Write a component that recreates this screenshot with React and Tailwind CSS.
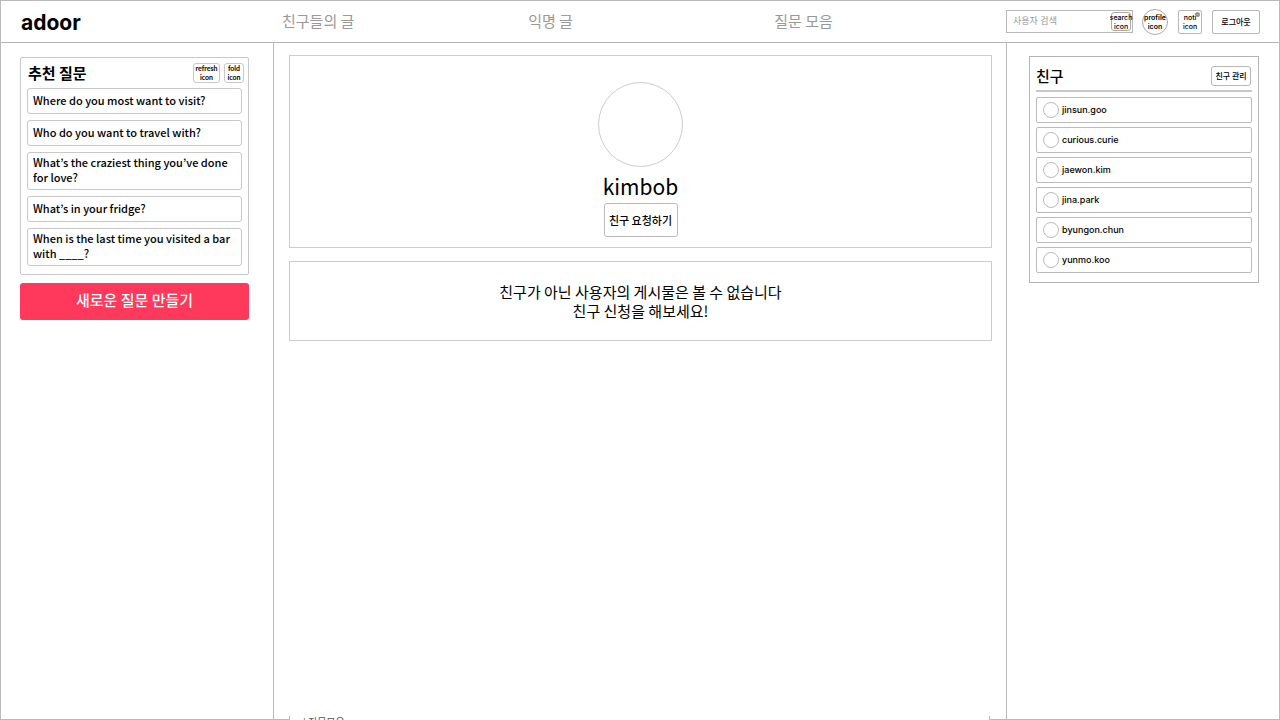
const questions = [
  'Where do you most want to visit?',
  'Who do you want to travel with?',
  'What’s the craziest thing you’ve done for love?',
  'What’s in your fridge?',
  'When is the last time you visited a bar with ____?',
];

const friends = ['jinsun.goo', 'curious.curie', 'jaewon.kim', 'jina.park', 'byungon.chun', 'yunmo.koo'];

function Header() {
  return (
    <header className="flex h-[42px] shrink-0 items-center border-b border-[#b4b4b4]">
      <div className="w-[273px] shrink-0 pl-5 pt-0.5">
        <a href="#home" className="font-['Inter','Liberation_Sans',sans-serif] text-[21px] font-bold leading-6">
          adoor
        </a>
      </div>
      <nav className="grid flex-1 grid-cols-[34fr_34fr_32fr] pb-0.5 pl-2 text-[15px] leading-5 text-[#999]">
        <a href="#friends">친구들의 글</a>
        <a href="#anonymous">익명 글</a>
        <a href="#questions">질문 모음</a>
      </nav>
      <div className="flex w-[273px] shrink-0 items-center pr-[19px] font-['Inter','Noto_Sans_CJK_KR',sans-serif]">
        <div className="flex h-[23px] w-[127px] items-center border border-[#b8b8b8]">
          <input
            type="search"
            aria-label="사용자 검색"
            placeholder="사용자 검색"
            className="w-0 flex-1 bg-transparent pb-0.5 pl-1.5 text-[9px] leading-3 outline-none placeholder:text-[#999]"
          />
          <button className="mr-px flex h-[19px] w-5 items-center justify-center rounded-[3px] border border-[#aaa] text-[7px] font-medium leading-[9px]">
            <span className="shrink-0">search<br />icon</span>
          </button>
        </div>
        <button className="ml-[9px] flex size-[26px] items-center justify-center rounded-full border border-[#aaa] text-[7px] font-semibold leading-[9px]">
          <span className="shrink-0">profile<br />icon</span>
        </button>
        <button className="relative ml-2.5 flex h-6 w-6 items-center justify-center rounded-[2px] border border-[#b8b8b8] text-[7px] font-medium leading-[9px]">
          <span>noti<br />icon</span>
          <span className="absolute right-px top-px size-[5px] rounded-full bg-[#999]" />
        </button>
        <button className="ml-auto h-6 w-12 rounded-[2px] border border-[#b8b8b8] text-[8px] font-medium leading-3">
          로그아웃
        </button>
      </div>
    </header>
  );
}

function QuestionPanel() {
  return (
    <aside className="w-[272px] shrink-0 pl-[19px] pr-6 pt-3.5">
      <section className="rounded-[2px] border border-[#c8c8c8] px-1.5 pb-2 pt-[5px]">
        <div className="mb-[5px] flex h-5 items-center">
          <h2 className="pl-px text-[15px] font-bold leading-5">추천 질문</h2>
          <button className="ml-auto h-5 w-[27px] whitespace-nowrap rounded-[3px] border border-[#c8c8c8] text-center font-['Lato',sans-serif] text-[7px] font-bold leading-[9px]">
            refresh<br />icon
          </button>
          <button className="-mr-0.5 ml-1 h-5 w-5 rounded-[3px] border border-[#c8c8c8] font-['Lato',sans-serif] text-[7px] font-bold leading-[9px]">
            fold<br />icon
          </button>
        </div>
        <ul className="flex flex-col gap-1.5">
          {questions.map((question) => (
            <li key={question} className="flex min-h-[26px] items-center rounded-[3px] border border-[#c8c8c8] px-[5px] pb-1 pt-0.5 text-[11px] font-medium leading-[15px]">
              {question}
            </li>
          ))}
        </ul>
      </section>
      <button className="mt-2 h-[37px] w-full rounded-[3px] bg-[#ff395c] pb-1 text-[15px] font-medium leading-5 text-white">
        새로운 질문 만들기
      </button>
    </aside>
  );
}

function Profile() {
  return (
    <main className="flex flex-1 flex-col border-x border-[#bbb] pl-[15px] pr-3.5 pt-3">
      <section className="flex h-[193px] flex-col items-center border border-[#ccc] pt-[26px]">
        <div className="size-[85px] shrink-0 rounded-full border border-[#ccc]" />
        <h1 className="mt-1 text-[21px] leading-[30px]">kimbob</h1>
        <button className="mt-0.5 h-[34px] w-[74px] shrink-0 whitespace-nowrap rounded-[3px] border border-[#bbb] text-[11px] font-medium leading-4">
          친구 요청하기
        </button>
      </section>
      <section className="mt-[13px] flex h-20 items-center justify-center border border-[#ccc] text-center">
        <p className="text-[15px] leading-[19px]">
          친구가 아닌 사용자의 게시물은 볼 수 없습니다
          <br />
          친구 신청을 해보세요!
        </p>
      </section>
      <section className="-mb-px mr-0.5 mt-auto h-1 overflow-hidden border-x border-[#bbb] bg-white pl-[13px] text-[10px] leading-3 text-[#555]">
        | 질문모음
      </section>
    </main>
  );
}

function FriendPanel() {
  return (
    <aside className="w-[272px] shrink-0 pl-[22px] pr-5 pt-[13px]">
      <section className="border border-[#b4b4b4] px-1.5 pb-[9px] pt-[9px]">
        <div className="mb-[5px] flex h-[26px] items-start border-b-2 border-[#c8c8c8]">
          <h2 className="text-[15px] font-medium leading-5">친구</h2>
          <button className="ml-auto mr-px h-5 w-10 rounded-[3px] border border-[#b8b8b8] text-[8px] font-medium leading-3">
            친구 관리
          </button>
        </div>
        <ul className="flex flex-col gap-1">
          {friends.map((name) => (
            <li key={name} className="flex h-[26px] items-center gap-[3px] rounded-[2px] border border-[#bbb] pl-1.5">
              <span className="size-4 rounded-full border border-[#bbb]" />
              <a href={'#' + name} className="font-['Inter','Liberation_Sans',sans-serif] text-[9px] font-medium leading-3">
                {name}
              </a>
            </li>
          ))}
        </ul>
      </section>
    </aside>
  );
}

export default function App() {
  return (
    <div className="flex h-screen min-h-[420px] flex-col border border-[#bbb] bg-white font-['Noto_Sans_CJK_KR',sans-serif] text-black">
      <Header />
      <div className="flex min-h-0 flex-1">
        <QuestionPanel />
        <Profile />
        <FriendPanel />
      </div>
    </div>
  );
}
